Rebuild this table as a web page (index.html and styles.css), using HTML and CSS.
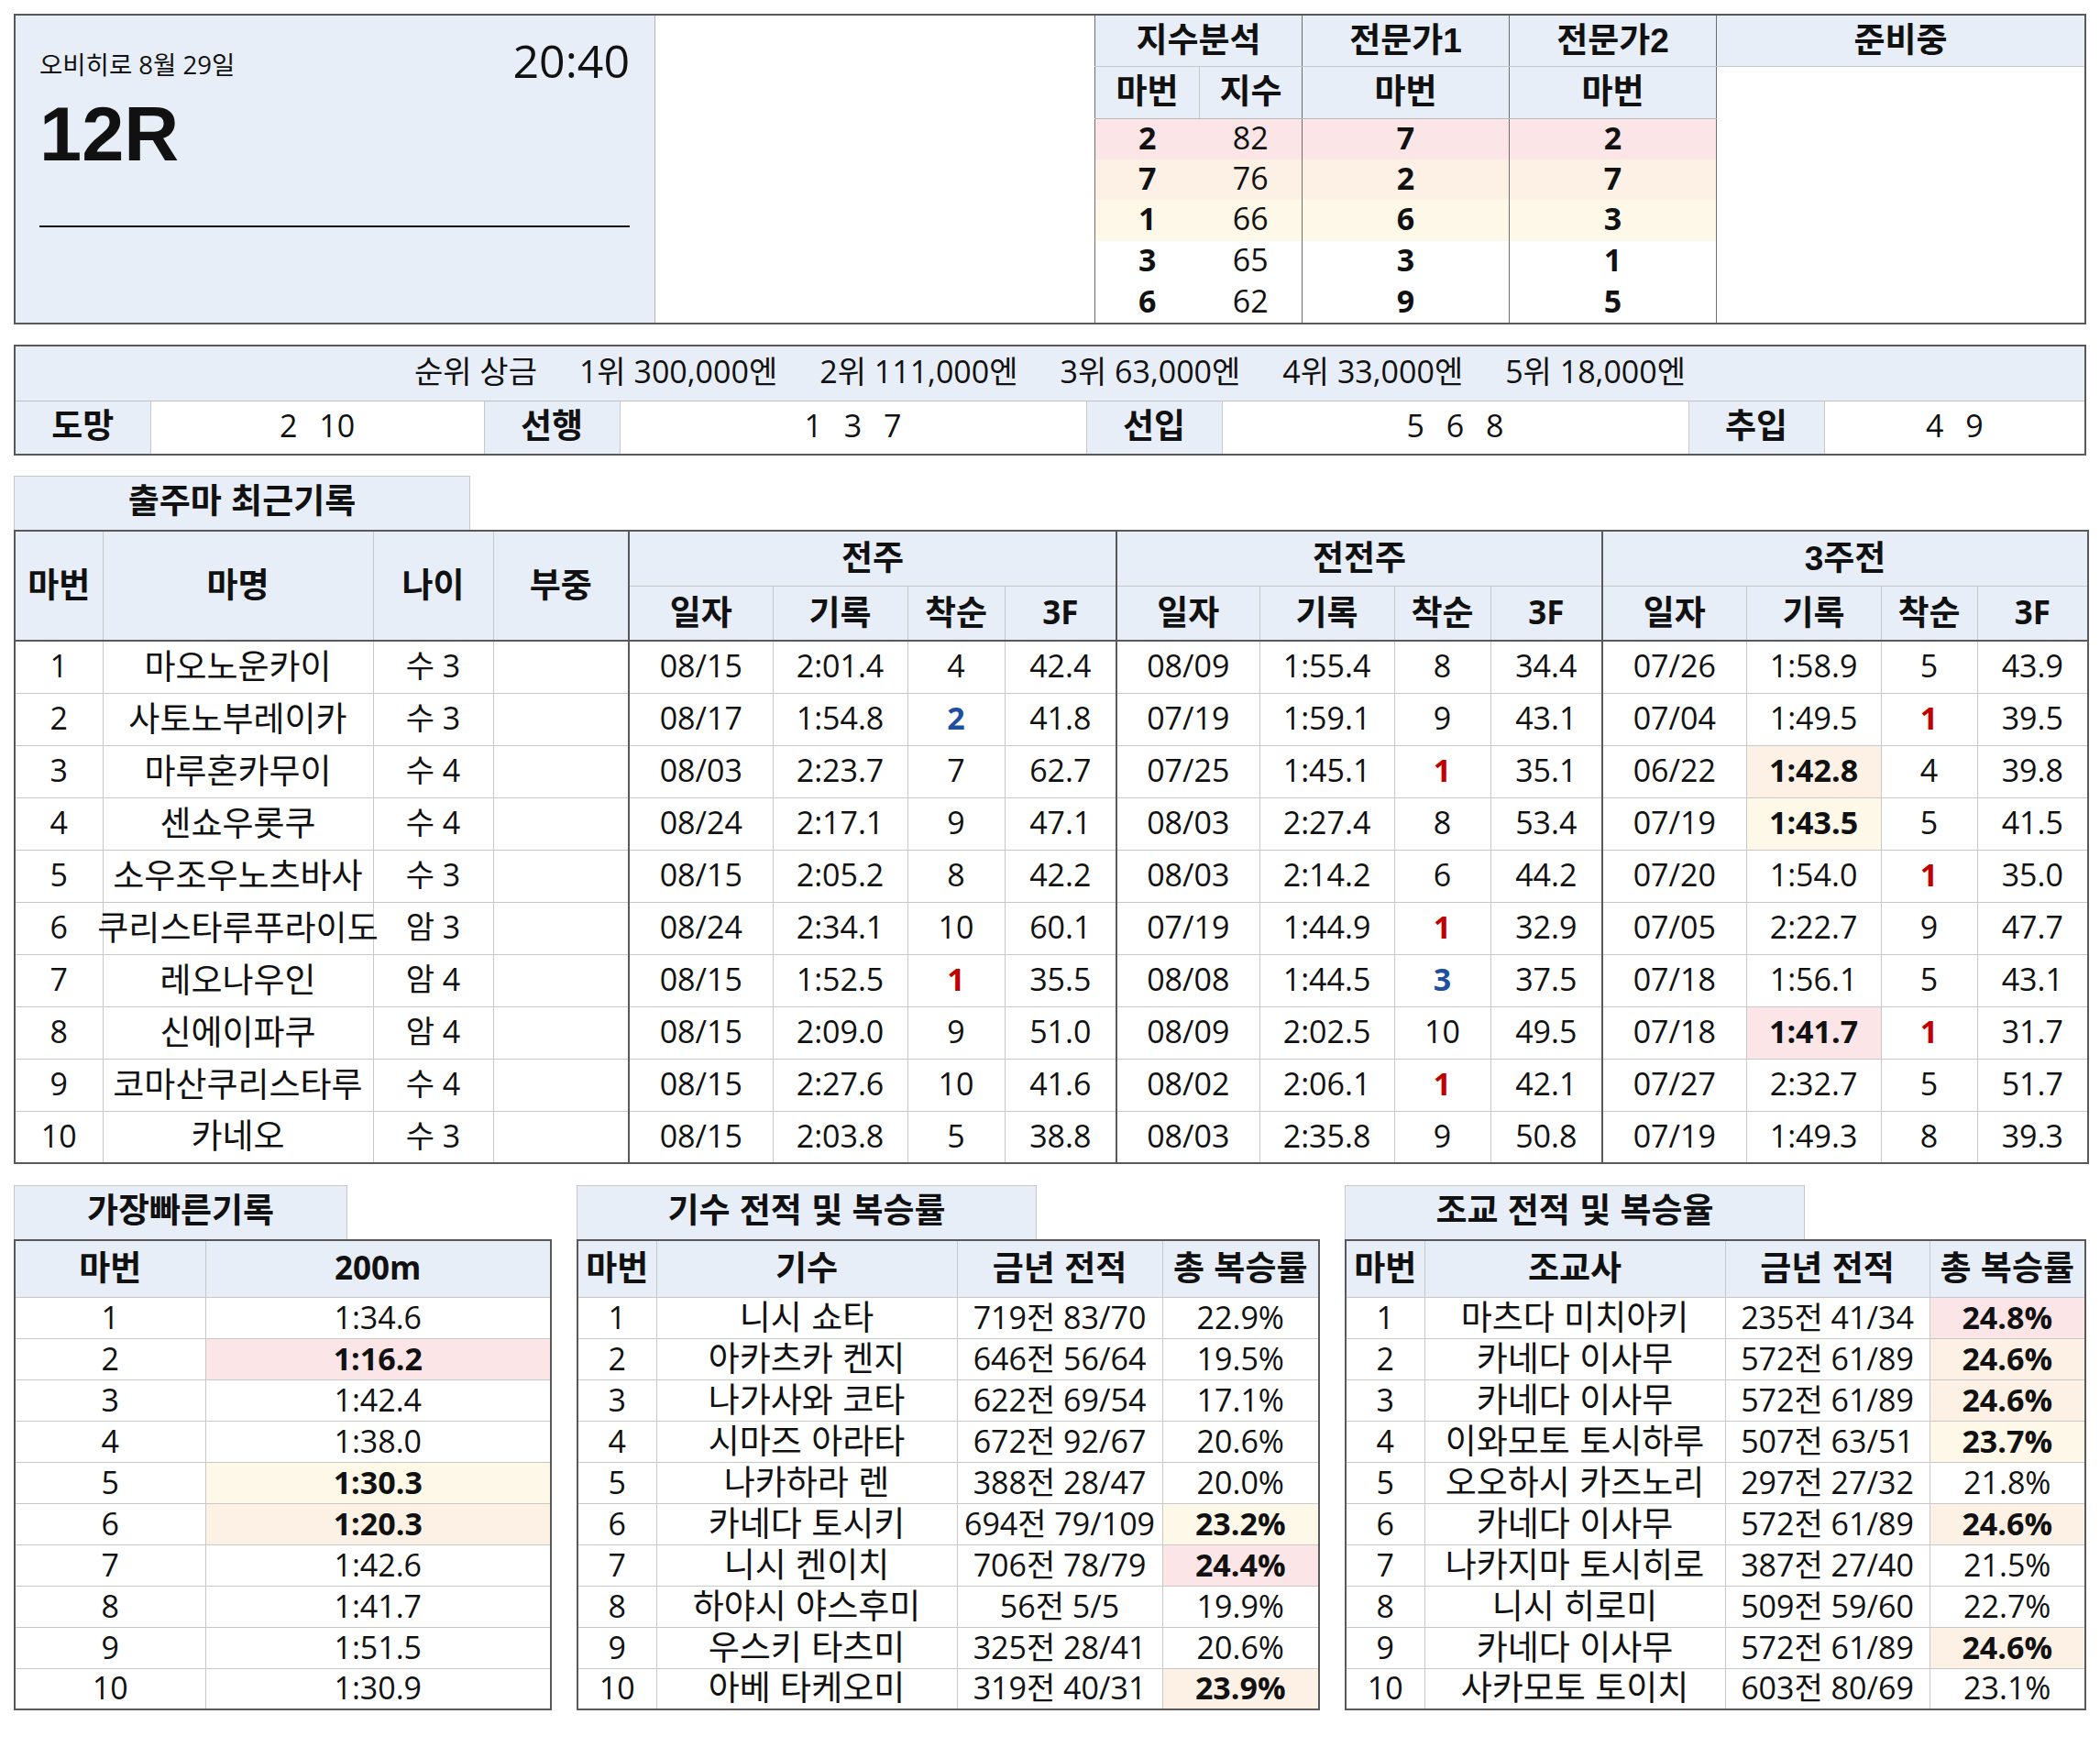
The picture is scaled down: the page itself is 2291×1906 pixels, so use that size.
FILE: index.html
```html
<!DOCTYPE html>
<html lang="ko">
<head>
<meta charset="utf-8">
<title>오비히로 12R</title>
<link rel="stylesheet" href="styles.css">
</head>
<body>
<div class="page">

  <section class="top">
    <div class="race">
      <div class="race-meta">
        <span class="race-date">오비히로 8월 29일</span>
        <span class="race-time">20:40</span>
      </div>
      <div class="race-no">12R</div>
      <div class="race-line"></div>
    </div>
    <div class="blank"></div>
    <table class="idx">
      <colgroup><col class="c114"><col class="c112"><col class="c226"><col class="c226"><col></colgroup>
      <tr class="idx-h1">
        <th colspan="2" class="grp">지수분석</th>
        <th class="grp">전문가1</th>
        <th class="grp">전문가2</th>
        <th class="grp">준비중</th>
      </tr>
      <tr class="idx-h2">
        <th class="grp">마번</th><th>지수</th><th class="grp">마번</th><th class="grp">마번</th>
        <td rowspan="6" class="grp prep"></td>
      </tr>
      <tr class="idx-r h1"><td class="grp bd">2</td><td>82</td><td class="grp bd">7</td><td class="grp bd">2</td></tr>
      <tr class="idx-r h2"><td class="grp bd">7</td><td>76</td><td class="grp bd">2</td><td class="grp bd">7</td></tr>
      <tr class="idx-r h3"><td class="grp bd">1</td><td>66</td><td class="grp bd">6</td><td class="grp bd">3</td></tr>
      <tr class="idx-r"><td class="grp bd">3</td><td>65</td><td class="grp bd">3</td><td class="grp bd">1</td></tr>
      <tr class="idx-r"><td class="grp bd">6</td><td>62</td><td class="grp bd">9</td><td class="grp bd">5</td></tr>
    </table>
  </section>

  <table class="prize">
    <colgroup><col class="p148"><col class="p364"><col class="p148"><col class="p509"><col class="p148"><col class="p509"><col class="p148"><col></colgroup>
    <tr class="prize-row">
      <td colspan="8">
        <span class="pz">순위 상금</span><span class="pz">1위 300,000엔</span><span class="pz">2위 111,000엔</span><span class="pz">3위 63,000엔</span><span class="pz">4위 33,000엔</span><span class="pz">5위 18,000엔</span>
      </td>
    </tr>
    <tr class="style-row">
      <th>도망</th><td class="sp">2 10</td>
      <th>선행</th><td class="sp">1 3 7</td>
      <th>선입</th><td class="sp">5 6 8</td>
      <th>추입</th><td class="sp">4 9</td>
    </tr>
  </table>

  <div class="tab tab-main">출주마 최근기록</div>
  <table class="main">
    <colgroup>
      <col style="width:96px"><col style="width:295px"><col style="width:131px"><col style="width:148px">
      <col style="width:157px"><col style="width:147px"><col style="width:106px"><col style="width:122px">
      <col style="width:156px"><col style="width:147px"><col style="width:105px"><col style="width:122px">
      <col style="width:157px"><col style="width:147px"><col style="width:105px"><col style="width:121px">
    </colgroup>
    <thead>
      <tr class="mh">
        <th rowspan="2">마번</th><th rowspan="2">마명</th><th rowspan="2">나이</th><th rowspan="2">부중</th>
        <th colspan="4" class="gs">전주</th><th colspan="4" class="gs">전전주</th><th colspan="4" class="gs">3주전</th>
      </tr>
      <tr class="mh">
        <th class="gs">일자</th><th>기록</th><th>착순</th><th class="lat">3F</th>
        <th class="gs">일자</th><th>기록</th><th>착순</th><th class="lat">3F</th>
        <th class="gs">일자</th><th>기록</th><th>착순</th><th class="lat">3F</th>
      </tr>
    </thead>
    <tbody>
      <tr><td>1</td><td class="nm"><span>마오노운카이</span></td><td>수 3</td><td></td>
        <td class="gs">08/15</td><td>2:01.4</td><td>4</td><td>42.4</td>
        <td class="gs">08/09</td><td>1:55.4</td><td>8</td><td>34.4</td>
        <td class="gs">07/26</td><td>1:58.9</td><td>5</td><td>43.9</td></tr>
      <tr><td>2</td><td class="nm"><span>사토노부레이카</span></td><td>수 3</td><td></td>
        <td class="gs">08/17</td><td>1:54.8</td><td class="b">2</td><td>41.8</td>
        <td class="gs">07/19</td><td>1:59.1</td><td>9</td><td>43.1</td>
        <td class="gs">07/04</td><td>1:49.5</td><td class="r">1</td><td>39.5</td></tr>
      <tr><td>3</td><td class="nm"><span>마루혼카무이</span></td><td>수 4</td><td></td>
        <td class="gs">08/03</td><td>2:23.7</td><td>7</td><td>62.7</td>
        <td class="gs">07/25</td><td>1:45.1</td><td class="r">1</td><td>35.1</td>
        <td class="gs">06/22</td><td class="h2">1:42.8</td><td>4</td><td>39.8</td></tr>
      <tr><td>4</td><td class="nm"><span>센쇼우롯쿠</span></td><td>수 4</td><td></td>
        <td class="gs">08/24</td><td>2:17.1</td><td>9</td><td>47.1</td>
        <td class="gs">08/03</td><td>2:27.4</td><td>8</td><td>53.4</td>
        <td class="gs">07/19</td><td class="h3">1:43.5</td><td>5</td><td>41.5</td></tr>
      <tr><td>5</td><td class="nm"><span>소우조우노츠바사</span></td><td>수 3</td><td></td>
        <td class="gs">08/15</td><td>2:05.2</td><td>8</td><td>42.2</td>
        <td class="gs">08/03</td><td>2:14.2</td><td>6</td><td>44.2</td>
        <td class="gs">07/20</td><td>1:54.0</td><td class="r">1</td><td>35.0</td></tr>
      <tr><td>6</td><td class="nm"><span>쿠리스타루푸라이도</span></td><td>암 3</td><td></td>
        <td class="gs">08/24</td><td>2:34.1</td><td>10</td><td>60.1</td>
        <td class="gs">07/19</td><td>1:44.9</td><td class="r">1</td><td>32.9</td>
        <td class="gs">07/05</td><td>2:22.7</td><td>9</td><td>47.7</td></tr>
      <tr><td>7</td><td class="nm"><span>레오나우인</span></td><td>암 4</td><td></td>
        <td class="gs">08/15</td><td>1:52.5</td><td class="r">1</td><td>35.5</td>
        <td class="gs">08/08</td><td>1:44.5</td><td class="b">3</td><td>37.5</td>
        <td class="gs">07/18</td><td>1:56.1</td><td>5</td><td>43.1</td></tr>
      <tr><td>8</td><td class="nm"><span>신에이파쿠</span></td><td>암 4</td><td></td>
        <td class="gs">08/15</td><td>2:09.0</td><td>9</td><td>51.0</td>
        <td class="gs">08/09</td><td>2:02.5</td><td>10</td><td>49.5</td>
        <td class="gs">07/18</td><td class="h1">1:41.7</td><td class="r">1</td><td>31.7</td></tr>
      <tr><td>9</td><td class="nm"><span>코마산쿠리스타루</span></td><td>수 4</td><td></td>
        <td class="gs">08/15</td><td>2:27.6</td><td>10</td><td>41.6</td>
        <td class="gs">08/02</td><td>2:06.1</td><td class="r">1</td><td>42.1</td>
        <td class="gs">07/27</td><td>2:32.7</td><td>5</td><td>51.7</td></tr>
      <tr><td>10</td><td class="nm"><span>카네오</span></td><td>수 3</td><td></td>
        <td class="gs">08/15</td><td>2:03.8</td><td>5</td><td>38.8</td>
        <td class="gs">08/03</td><td>2:35.8</td><td>9</td><td>50.8</td>
        <td class="gs">07/19</td><td>1:49.3</td><td>8</td><td>39.3</td></tr>
    </tbody>
  </table>

  <div class="bottom">
    <div class="panel panel-fast">
      <div class="tab tab-fast">가장빠른기록</div>
      <table class="mini">
        <colgroup><col style="width:208px"><col></colgroup>
        <tr class="mini-h"><th>마번</th><th class="lat">200m</th></tr>
        <tr><td>1</td><td>1:34.6</td></tr>
        <tr><td>2</td><td class="h1">1:16.2</td></tr>
        <tr><td>3</td><td>1:42.4</td></tr>
        <tr><td>4</td><td>1:38.0</td></tr>
        <tr><td>5</td><td class="h3">1:30.3</td></tr>
        <tr><td>6</td><td class="h2">1:20.3</td></tr>
        <tr><td>7</td><td>1:42.6</td></tr>
        <tr><td>8</td><td>1:41.7</td></tr>
        <tr><td>9</td><td>1:51.5</td></tr>
        <tr><td>10</td><td>1:30.9</td></tr>
      </table>
    </div>

    <div class="panel panel-jockey">
      <div class="tab tab-wide">기수 전적 및 복승률</div>
      <table class="mini">
        <colgroup><col style="width:86px"><col style="width:328px"><col style="width:224px"><col></colgroup>
        <tr class="mini-h"><th>마번</th><th>기수</th><th>금년 전적</th><th>총 복승률</th></tr>
        <tr><td>1</td><td class="nm">니시 쇼타</td><td>719전 83/70</td><td>22.9%</td></tr>
        <tr><td>2</td><td class="nm">아카츠카 켄지</td><td>646전 56/64</td><td>19.5%</td></tr>
        <tr><td>3</td><td class="nm">나가사와 코타</td><td>622전 69/54</td><td>17.1%</td></tr>
        <tr><td>4</td><td class="nm">시마즈 아라타</td><td>672전 92/67</td><td>20.6%</td></tr>
        <tr><td>5</td><td class="nm">나카하라 렌</td><td>388전 28/47</td><td>20.0%</td></tr>
        <tr><td>6</td><td class="nm">카네다 토시키</td><td>694전 79/109</td><td class="h3">23.2%</td></tr>
        <tr><td>7</td><td class="nm">니시 켄이치</td><td>706전 78/79</td><td class="h1">24.4%</td></tr>
        <tr><td>8</td><td class="nm">하야시 야스후미</td><td>56전 5/5</td><td>19.9%</td></tr>
        <tr><td>9</td><td class="nm">우스키 타츠미</td><td>325전 28/41</td><td>20.6%</td></tr>
        <tr><td>10</td><td class="nm">아베 타케오미</td><td>319전 40/31</td><td class="h2">23.9%</td></tr>
      </table>
    </div>

    <div class="panel panel-trainer">
      <div class="tab tab-wide">조교 전적 및 복승율</div>
      <table class="mini">
        <colgroup><col style="width:86px"><col style="width:328px"><col style="width:223px"><col></colgroup>
        <tr class="mini-h"><th>마번</th><th>조교사</th><th>금년 전적</th><th>총 복승률</th></tr>
        <tr><td>1</td><td class="nm">마츠다 미치아키</td><td>235전 41/34</td><td class="h1">24.8%</td></tr>
        <tr><td>2</td><td class="nm">카네다 이사무</td><td>572전 61/89</td><td class="h2">24.6%</td></tr>
        <tr><td>3</td><td class="nm">카네다 이사무</td><td>572전 61/89</td><td class="h2">24.6%</td></tr>
        <tr><td>4</td><td class="nm">이와모토 토시하루</td><td>507전 63/51</td><td class="h3">23.7%</td></tr>
        <tr><td>5</td><td class="nm">오오하시 카즈노리</td><td>297전 27/32</td><td>21.8%</td></tr>
        <tr><td>6</td><td class="nm">카네다 이사무</td><td>572전 61/89</td><td class="h2">24.6%</td></tr>
        <tr><td>7</td><td class="nm">나카지마 토시히로</td><td>387전 27/40</td><td>21.5%</td></tr>
        <tr><td>8</td><td class="nm">니시 히로미</td><td>509전 59/60</td><td>22.7%</td></tr>
        <tr><td>9</td><td class="nm">카네다 이사무</td><td>572전 61/89</td><td class="h2">24.6%</td></tr>
        <tr><td>10</td><td class="nm">사카모토 토이치</td><td>603전 80/69</td><td>23.1%</td></tr>
      </table>
    </div>
  </div>

</div>
</body>
</html>
```

FILE: styles.css
```css
* { box-sizing: border-box; }

html, body {
  margin: 0;
  padding: 0;
  background: #ffffff;
}

body {
  font-family: "Open Sans", "Noto Sans CJK KR", sans-serif;
  color: #111111;
  font-size: 34px;
}

.page {
  padding: 15px 0 0 15px;
  width: 2291px;
}

table {
  border-collapse: collapse;
  table-layout: fixed;
}

th, td {
  padding: 0 0 3px 0;
  text-align: center;
  vertical-align: middle;
  white-space: nowrap;
  line-height: 1;
}

/* Hangul-only labels and names: larger Hangul, compact line metrics */
th, .nm, .tab, .race-no {
  font-family: "Liberation Sans", "Noto Sans CJK KR", sans-serif;
}

th {
  font-weight: 700;
  font-size: 37px;
  padding: 1px 0 0 0;
}

th.lat {
  font-family: "Open Sans", "Noto Sans CJK KR", sans-serif;
  font-size: 35px;
  padding: 0 0 3px 0;
}

.nm {
  font-size: 37px;
  padding: 1px 0 0 0;
}
.nm span {
  display: inline-block;
  margin: 0 -12px;
}

/* ---------- top section ---------- */
.top {
  display: flex;
  width: 2261px;
  height: 339px;
  border: 2px solid #595959;
}

.race {
  width: 698px;
  flex: none;
  background: #e8eef7;
  border-right: 1px solid #b4b4b4;
  padding: 24px 27px 0 26px;
}

.race-meta {
  display: flex;
  justify-content: space-between;
  align-items: flex-end;
}

.race-date {
  font-size: 27.5px;
  line-height: 1;
  margin-bottom: 7px;
}

.race-time {
  font-size: 50px;
  line-height: 1;
}

.race-no {
  font-size: 83px;
  font-weight: 700;
  line-height: 1;
  margin-top: 14px;
}

.race-line {
  margin-top: 58px;
  height: 2px;
  background: #111111;
}

.blank { flex: 1; }

.idx {
  width: 1080px;
  flex: none;
  height: 335px;
}

.c114 { width: 114px; }
.c112 { width: 112px; }
.c226 { width: 226px; }

.idx th { padding: 0; }
.idx td { padding-bottom: 4px; }

.idx .grp { border-left: 1px solid #6e6e6e; }

.idx-h1 { height: 55px; }
.idx-h1 th {
  background: #e8eef7;
  border-bottom: 1px solid #c8c8c8;
}

.idx-h2 { height: 57px; }
.idx-h2 th {
  background: #e8eef7;
  border-bottom: 1px solid #b8b8b8;
}
.idx-h2 th + th { border-left: 1px solid #c8c8c8; }
.idx-h2 th.grp { border-left: 1px solid #6e6e6e; }

.prep { background: #ffffff; }

.idx-r { height: 44.6px; }
.bd { font-weight: 700; }

/* ---------- prize section ---------- */
.prize {
  margin-top: 22px;
  width: 2261px;
  border: 2px solid #595959;
}

.prize td { padding-bottom: 5px; }
.prize th { padding: 0 0 2px 0; }

.p148 { width: 148px; }
.p364 { width: 364px; }
.p509 { width: 509px; }

.prize-row { height: 60px; }
.prize-row td {
  background: #e8eef7;
  border-bottom: 1px solid #c0c0c0;
}

.pz { margin: 0 23px; }

.style-row { height: 59px; }
.style-row th {
  background: #e8eef7;
  border-right: 1px solid #c8c8c8;
}
.style-row td { border-right: 1px solid #c8c8c8; }
.sp { word-spacing: 15px; }

/* ---------- tabs ---------- */
.tab {
  height: 59px;
  background: #e8eef7;
  border: 1px solid #c8c8c8;
  border-bottom: none;
  font-size: 37px;
  font-weight: 700;
  line-height: 55px;
  text-align: center;
}

.tab-main {
  margin-top: 22px;
  width: 498px;
}

.tab-fast { width: 364px; }
.tab-wide { width: 502px; }

/* ---------- main table ---------- */
.main {
  width: 2262px;
  border: 2px solid #595959;
}

.main th, .main td {
  border: 1px solid #c8c8c8;
}

.main thead th { background: #e8eef7; }
.main tr.mh { height: 60px; }
.main thead tr:last-child th,
.main thead th[rowspan] { border-bottom: 2px solid #595959; }

.main tbody tr { height: 57px; }

.main .gs { border-left: 2px solid #595959; }

.r { color: #c00000; font-weight: 700; }
.b { color: #1f4f9f; font-weight: 700; }

.h1 { background: #fbe5e6; font-weight: 700; }
.h2 { background: #fdf1e5; font-weight: 700; }
.h3 { background: #fdf8e7; font-weight: 700; }
tr.h1, tr.h2, tr.h3 { font-weight: 400; }

/* ---------- bottom tables ---------- */
.bottom {
  display: flex;
  gap: 27px;
  margin-top: 23px;
}

.panel-fast { width: 587px; }
.panel-jockey { width: 811px; }
.panel-trainer { width: 809px; }

.mini {
  width: 100%;
  border: 2px solid #595959;
}

.mini th, .mini td {
  border: 1px solid #c8c8c8;
}
.mini td { padding-bottom: 2px; }
.mini td.nm { padding: 1px 0 0 0; }
.mini tr { height: 45px; }
.mini tr.mini-h { height: 62px; }
.mini-h th { background: #e8eef7; }
```
